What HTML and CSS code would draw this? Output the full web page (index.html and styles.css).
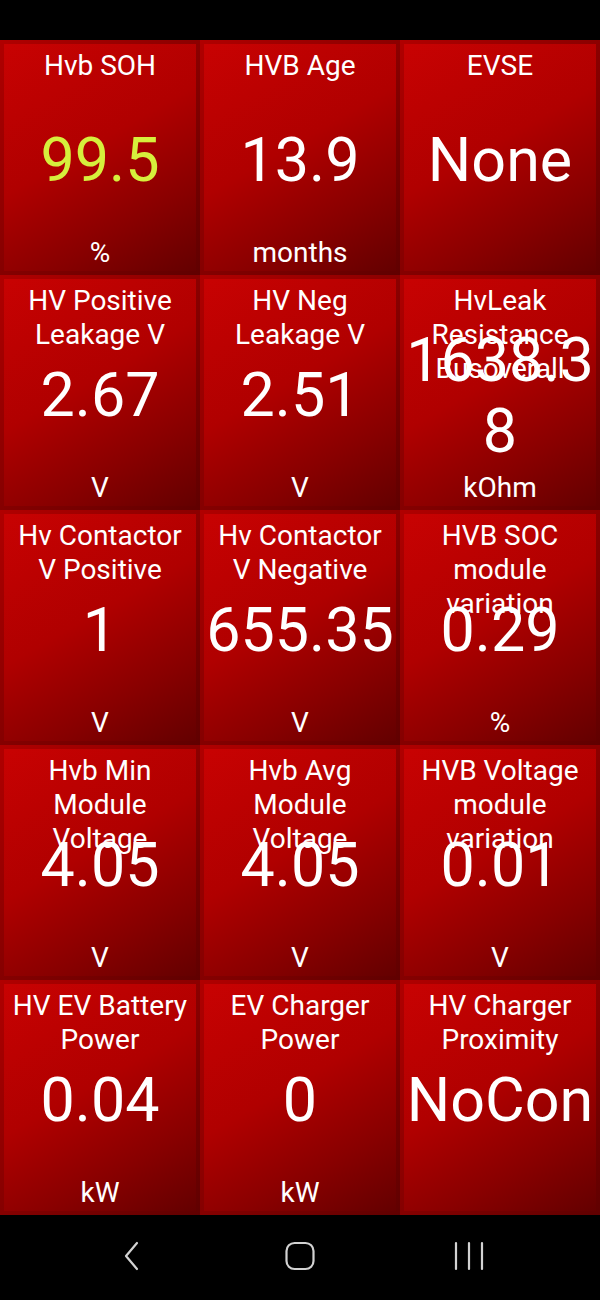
FILE: index.html
```html
<!DOCTYPE html>
<html lang="en">
<head>
  <meta charset="UTF-8" />
  <meta name="viewport" content="width=device-width, initial-scale=1" />
  <title>HV Battery Dashboard</title>
  <link rel="stylesheet" href="styles.css">
</head>
<body>
  <div class="status-bar"></div>

  <div class="board">
    <div class="cell"><div class="tile">
      <div class="title">Hvb SOH</div>
      <div class="value good">99.5</div>
      <div class="unit">%</div>
    </div></div>
    <div class="cell"><div class="tile">
      <div class="title">HVB Age</div>
      <div class="value">13.9</div>
      <div class="unit">months</div>
    </div></div>
    <div class="cell"><div class="tile">
      <div class="title">EVSE</div>
      <div class="value">None</div>
      <div class="unit"></div>
    </div></div>

    <div class="cell"><div class="tile">
      <div class="title">HV Positive Leakage V</div>
      <div class="value">2.67</div>
      <div class="unit">V</div>
    </div></div>
    <div class="cell"><div class="tile">
      <div class="title">HV Neg Leakage V</div>
      <div class="value">2.51</div>
      <div class="unit">V</div>
    </div></div>
    <div class="cell"><div class="tile">
      <div class="title">HvLeak Resistance Busoverall</div>
      <div class="value">1638.38</div>
      <div class="unit">kOhm</div>
    </div></div>

    <div class="cell"><div class="tile">
      <div class="title">Hv Contactor V Positive</div>
      <div class="value">1</div>
      <div class="unit">V</div>
    </div></div>
    <div class="cell"><div class="tile">
      <div class="title">Hv Contactor V Negative</div>
      <div class="value">655.35</div>
      <div class="unit">V</div>
    </div></div>
    <div class="cell"><div class="tile">
      <div class="title">HVB SOC module variation</div>
      <div class="value">0.29</div>
      <div class="unit">%</div>
    </div></div>

    <div class="cell"><div class="tile">
      <div class="title">Hvb Min Module Voltage</div>
      <div class="value">4.05</div>
      <div class="unit">V</div>
    </div></div>
    <div class="cell"><div class="tile">
      <div class="title">Hvb Avg Module Voltage</div>
      <div class="value">4.05</div>
      <div class="unit">V</div>
    </div></div>
    <div class="cell"><div class="tile">
      <div class="title">HVB Voltage module variation</div>
      <div class="value">0.01</div>
      <div class="unit">V</div>
    </div></div>

    <div class="cell"><div class="tile">
      <div class="title">HV EV Battery Power</div>
      <div class="value">0.04</div>
      <div class="unit">kW</div>
    </div></div>
    <div class="cell"><div class="tile">
      <div class="title">EV Charger Power</div>
      <div class="value">0</div>
      <div class="unit">kW</div>
    </div></div>
    <div class="cell"><div class="tile">
      <div class="title">HV Charger Proximity</div>
      <div class="value">NoCon</div>
      <div class="unit"></div>
    </div></div>
  </div>

  <div class="nav-bar">
    <svg class="nav-icon" width="40" height="40" viewBox="0 0 40 40">
      <path d="M26 7 L15 20 L26 33" fill="none" stroke="#d2d2d2" stroke-width="2.2" stroke-linecap="round" stroke-linejoin="round"/>
    </svg>
    <svg class="nav-icon" width="40" height="40" viewBox="0 0 40 40">
      <rect x="6.5" y="7" width="27" height="26" rx="8" fill="none" stroke="#d2d2d2" stroke-width="2.2"/>
    </svg>
    <svg class="nav-icon" width="40" height="40" viewBox="0 0 40 40">
      <path d="M7 7 V33 M20 7 V33 M33 7 V33" fill="none" stroke="#d2d2d2" stroke-width="2.2" stroke-linecap="round"/>
    </svg>
  </div>
</body>
</html>
```

FILE: styles.css
```css
body {
  margin: 0;
  background: #000;
  font-family: Roboto, "Noto Sans", sans-serif;
  color: #fff;
}
.status-bar {
  height: 40px;
  background: #000;
}
.board {
  display: grid;
  grid-template-columns: repeat(3, 200px);
  grid-template-rows: repeat(5, 235px);
}
.cell {
  padding: 4px;
  background: linear-gradient(135deg, #b00000 0%, #880000 50%, #600000 100%);
}
.tile {
  height: 100%;
  display: grid;
  text-align: center;
  background: linear-gradient(150deg, #c80202 0%, #b00000 45%, #880000 75%, #640000 100%);
}
.title, .value, .unit {
  grid-area: 1 / 1;
}
.title {
  align-self: start;
  padding: 5px 5px 0;
  font-size: 28px;
  line-height: 34px;
}
.value {
  align-self: center;
  margin-top: 6px;
  font-size: 61px;
  line-height: 71px;
  word-break: break-all;
}
.value.good {
  color: #d6ef3c;
}
.unit {
  align-self: end;
  padding-bottom: 1px;
  font-size: 28px;
  line-height: 34px;
}
.nav-bar {
  height: 85px;
  display: flex;
  justify-content: center;
  align-items: center;
  gap: 129px;
}
.nav-icon {
  display: block;
  margin-top: -4px;
}
```
